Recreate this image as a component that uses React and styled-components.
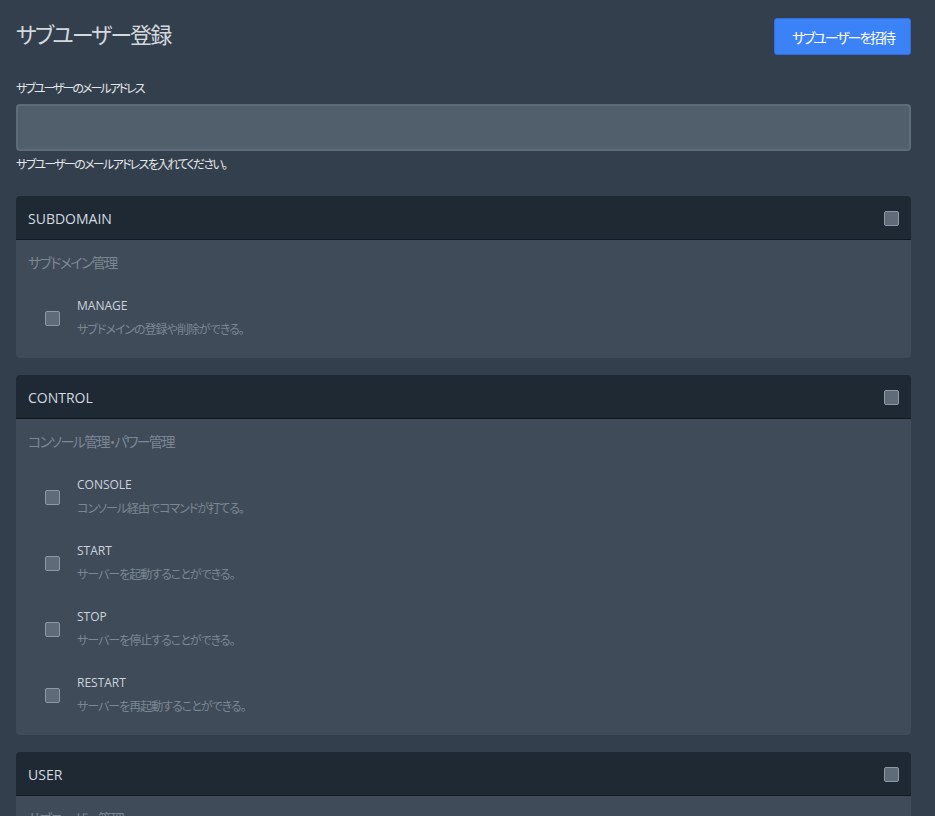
import React from "react";
import styled, { createGlobalStyle } from "styled-components";

const Global = createGlobalStyle`
  html, body { margin: 0; padding: 0; background: #333f4c; }
  body {
    font-family: "Open Sans", "Noto Sans CJK JP", sans-serif;
    font-feature-settings: "palt";
    -webkit-font-smoothing: antialiased;
  }
  * { box-sizing: border-box; }
`;

const Page = styled.div`
  background: #333f4c;
  padding: 18px 24px 0 16px;
  overflow: hidden;
  height: 816px;
`;

const TitleRow = styled.div`
  display: flex;
  align-items: flex-start;
  justify-content: space-between;
  height: 37px;
`;

const Title = styled.h1`
  margin: 0;
  font-size: 22px;
  line-height: 32px;
  font-weight: 400;
  color: #d3d8de;
  letter-spacing: -1.9px;
`;

const Button = styled.button`
  height: 37px;
  width: 137px;
  padding: 0 0 0 1px;
  background: #3b82f6;
  border: 1px solid #2f6fe0;
  border-radius: 3px;
  color: #ffffff;
  font-family: inherit;
  font-feature-settings: "palt";
  font-size: 14px;
  letter-spacing: -2.1px;
  cursor: pointer;
`;

const FormGroup = styled.div`
  margin-top: 26px;
`;

const Label = styled.label`
  display: block;
  font-size: 12px;
  line-height: 16px;
  color: #e4e7ea;
  letter-spacing: -2px;
  margin-bottom: 7px;
`;

const Input = styled.input`
  display: block;
  width: 100%;
  height: 47px;
  background: #515f6c;
  border: 2px solid #5f6b79;
  border-radius: 4px;
  outline: none;
  color: #fff;
`;

const Help = styled.div`
  margin-top: 6px;
  font-size: 12px;
  line-height: 16px;
  letter-spacing: -1.7px;
  color: #e4e7ea;
`;

const Panels = styled.div`
  margin-top: 23px;
  display: flex;
  flex-direction: column;
  gap: 17px;
`;

const Panel = styled.section`
  border-radius: 4px;
  overflow: hidden;
  background: #3f4b59;
`;

const PanelHeader = styled.div`
  height: 44px;
  display: flex;
  align-items: center;
  justify-content: space-between;
  padding: 1px 12px 0;
  background: #1f2933;
  border-bottom: 1px solid #12181f;
`;

const HeaderTitle = styled.span`
  font-size: 14px;
  color: #d3dae1;
`;

const Check = styled.span`
  display: inline-block;
  width: 15px;
  height: 15px;
  flex: none;
  background: #5f6b78;
  border: 1px solid #8d98a4;
  border-radius: 2px;
`;

const PanelBody = styled.div`
  padding: 13px 12px 20px;
`;

const Subtitle = styled.div`
  font-size: 14px;
  line-height: 20px;
  letter-spacing: -1.6px;
  color: #7b8794;
`;

const Items = styled.div`
  margin-top: 25px;
  display: flex;
  flex-direction: column;
  gap: 26px;
`;

const Item = styled.div`
  display: flex;
  align-items: center;
  padding-left: 17px;
  gap: 17px;
`;

const ItemText = styled.div`
  display: flex;
  flex-direction: column;
  gap: 8px;
`;

const ItemTitle = styled.div`
  font-size: 12px;
  line-height: 16px;
  color: #cdd3da;
`;

const ItemDesc = styled.div`
  font-size: 12px;
  line-height: 16px;
  letter-spacing: -1px;
  color: #7b8794;
`;

const sections = [
  {
    key: "SUBDOMAIN",
    subtitle: "サブドメイン管理",
    items: [{ t: "MANAGE", d: "サブドメインの登録や削除ができる。" }],
  },
  {
    key: "CONTROL",
    subtitle: "コンソール管理・パワー管理",
    items: [
      { t: "CONSOLE", d: "コンソール経由でコマンドが打てる。" },
      { t: "START", d: "サーバーを起動することができる。" },
      { t: "STOP", d: "サーバーを停止することができる。" },
      { t: "RESTART", d: "サーバーを再起動することができる。" },
    ],
  },
  {
    key: "USER",
    subtitle: "サブユーザー管理",
    items: [{ t: "CREATE", d: "サブユーザーを作成することができる。" }],
  },
];

export default function App() {
  return (
    <>
      <Global />
      <Page>
        <TitleRow>
          <Title>サブユーザー登録</Title>
          <Button>サブユーザーを招待</Button>
        </TitleRow>
        <FormGroup>
          <Label>サブユーザーのメールアドレス</Label>
          <Input type="email" />
          <Help>サブユーザーのメールアドレスを入れてください。</Help>
        </FormGroup>
        <Panels>
          {sections.map((s) => (
            <Panel key={s.key}>
              <PanelHeader>
                <HeaderTitle>{s.key}</HeaderTitle>
                <Check />
              </PanelHeader>
              <PanelBody>
                <Subtitle>{s.subtitle}</Subtitle>
                <Items>
                  {s.items.map((it) => (
                    <Item key={it.t}>
                      <Check />
                      <ItemText>
                        <ItemTitle>{it.t}</ItemTitle>
                        <ItemDesc>{it.d}</ItemDesc>
                      </ItemText>
                    </Item>
                  ))}
                </Items>
              </PanelBody>
            </Panel>
          ))}
        </Panels>
      </Page>
    </>
  );
}
